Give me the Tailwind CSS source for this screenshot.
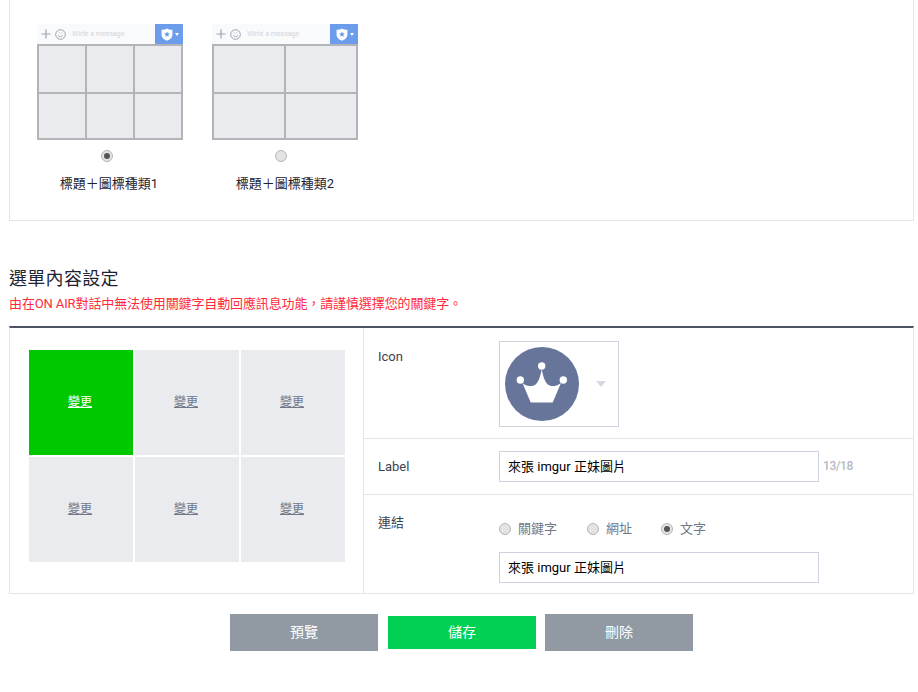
<!DOCTYPE html>
<html lang="zh-Hant">
<head>
    <meta charset="UTF-8">
    <meta name="viewport" content="width=device-width, initial-scale=1.0">
    <title>選單內容設定</title>
    <script src="https://cdn.jsdelivr.net/npm/@tailwindcss/browser@4"></script>
</head>
<body class="bg-white text-[#1e2433] h-[692px] overflow-hidden font-['Roboto','Noto_Sans_CJK_TC',sans-serif] text-[13px]">
<div class="ml-[9px] w-[905px]">

    <!-- layout picker -->
    <div class="h-[221px] border-x border-b border-[#e4e5ea] pl-[27px] pt-[24px] flex gap-[29px]">
        <div class="w-[146px] flex flex-col items-center">
            <div class="w-full h-[20px] bg-[#f9fafc] flex items-center">
                <svg class="ml-[4px] w-[10px] h-[10px]" viewBox="0 0 10 10"><path d="M5 0.5v9M0.5 5h9" stroke="#9ea3b0" stroke-width="1.2" fill="none"/></svg>
                <svg class="ml-[4px] w-[11px] h-[11px]" viewBox="0 0 11 11" fill="none" stroke="#9ea3b0"><circle cx="5.5" cy="5.5" r="4.8"/><path d="M3.2 6.5c.8 1.4 3.8 1.4 4.6 0"/><path d="M3.8 4h.8M6.4 4h.8"/></svg>
                <span class="ml-[6px] text-[7px] text-[#d2d5db]">Wirte a message</span>
                <div class="ml-auto w-[28px] h-full bg-[#6c9cec] flex items-center pl-[6px] gap-[2px]">
                    <svg class="w-[12px] h-[13px]" viewBox="0 0 11 12"><path d="M5.5 0.5c1.5 1 3 1.2 5 1.2v4.500c0 2.600-2.400 4.600-5 5.500-2.600-.9-5-2.900-5-5.500V1.700c2 0 3.500-.2 5-1.200z" fill="#fff"/><path d="M5.500 3.200l.8 1.700 1.800.2-1.300 1.200.3 1.800-1.600-.9-1.600.9.300-1.800-1.300-1.200 1.800-.2z" fill="#6c9cec"/></svg>
                    <svg class="w-[4px] h-[3px]" viewBox="0 0 4 3"><path d="M0 0h4L2 3z" fill="#fff"/></svg>
                </div>
            </div>
            <div class="w-full h-[96px] bg-[#b2b4b8] p-[2px] grid grid-cols-[46px_46px_46px] grid-rows-[46px_44px] gap-[2px]">
                <div class="bg-[#e9ebef]"></div><div class="bg-[#e9ebef]"></div><div class="bg-[#e9ebef]"></div>
                <div class="bg-[#e9ebef]"></div><div class="bg-[#e9ebef]"></div><div class="bg-[#e9ebef]"></div>
            </div>
            <span class="mt-[10px] mr-[6px] w-[12px] h-[12px] rounded-full border border-[#b5b5b5] bg-[#e4e4e4] flex items-center justify-center"><span class="w-[6px] h-[6px] rounded-full bg-[#555]"></span></span>
            <p class="mt-[13px] mr-[2px] leading-[18px]">標題＋圖標種類1</p>
        </div>
        <div class="w-[146px] flex flex-col items-center">
            <div class="w-full h-[20px] bg-[#f9fafc] flex items-center">
                <svg class="ml-[4px] w-[10px] h-[10px]" viewBox="0 0 10 10"><path d="M5 0.5v9M0.5 5h9" stroke="#9ea3b0" stroke-width="1.2" fill="none"/></svg>
                <svg class="ml-[4px] w-[11px] h-[11px]" viewBox="0 0 11 11" fill="none" stroke="#9ea3b0"><circle cx="5.5" cy="5.5" r="4.8"/><path d="M3.2 6.5c.8 1.4 3.8 1.4 4.6 0"/><path d="M3.8 4h.8M6.4 4h.8"/></svg>
                <span class="ml-[6px] text-[7px] text-[#d2d5db]">Wirte a message</span>
                <div class="ml-auto w-[28px] h-full bg-[#6c9cec] flex items-center pl-[6px] gap-[2px]">
                    <svg class="w-[12px] h-[13px]" viewBox="0 0 11 12"><path d="M5.5 0.5c1.5 1 3 1.2 5 1.2v4.500c0 2.600-2.400 4.600-5 5.500-2.600-.9-5-2.900-5-5.500V1.700c2 0 3.500-.2 5-1.200z" fill="#fff"/><path d="M5.500 3.200l.8 1.700 1.800.2-1.300 1.200.3 1.800-1.600-.9-1.600.9.300-1.800-1.300-1.200 1.800-.2z" fill="#6c9cec"/></svg>
                    <svg class="w-[4px] h-[3px]" viewBox="0 0 4 3"><path d="M0 0h4L2 3z" fill="#fff"/></svg>
                </div>
            </div>
            <div class="w-full h-[96px] bg-[#b2b4b8] p-[2px] grid grid-cols-[70px_70px] grid-rows-[46px_44px] gap-[2px]">
                <div class="bg-[#e9ebef]"></div><div class="bg-[#e9ebef]"></div>
                <div class="bg-[#e9ebef]"></div><div class="bg-[#e9ebef]"></div>
            </div>
            <span class="mt-[10px] mr-[8px] w-[12px] h-[12px] rounded-full border border-[#b5b5b5] bg-[#e4e4e4]"></span>
            <p class="mt-[13px] leading-[18px]">標題＋圖標種類2</p>
        </div>
    </div>

    <!-- section heading -->
    <h2 class="mt-[47px] text-[18px] tracking-[0.3px] leading-[22px] font-normal">選單內容設定</h2>
    <p class="mt-[5px] text-[13px] tracking-[-0.12px] leading-[17px] text-[#ff2a3a]">由在ON AIR對話中無法使用關鍵字自動回應訊息功能，請謹慎選擇您的關鍵字。</p>

    <!-- content table -->
    <div class="mt-[14px] h-[268px] border-t-2 border-t-[#4c5364] border-x border-b border-x-[#e4e5ea] border-b-[#e4e5ea] flex">
        <div class="w-[354px] shrink-0 border-r border-[#e4e5ea] pt-[22px] pl-[19px]">
            <div class="grid grid-cols-[104px_104px_104px] grid-rows-[105px_105px] gap-[2px] text-[12px]">
                <a class="bg-[#00c800] text-white underline flex items-center justify-center pb-[1px] pr-[2px]">變更</a>
                <a class="bg-[#e9ebef] text-[#6f7888] underline flex items-center justify-center pb-[1px] pr-[2px]">變更</a>
                <a class="bg-[#e9ebef] text-[#6f7888] underline flex items-center justify-center pb-[1px] pr-[2px]">變更</a>
                <a class="bg-[#e9ebef] text-[#6f7888] underline flex items-center justify-center pb-[1px] pr-[2px]">變更</a>
                <a class="bg-[#e9ebef] text-[#6f7888] underline flex items-center justify-center pb-[1px] pr-[2px]">變更</a>
                <a class="bg-[#e9ebef] text-[#6f7888] underline flex items-center justify-center pb-[1px] pr-[2px]">變更</a>
            </div>
        </div>
        <div class="flex-1 flex flex-col">
            <div class="h-[111px] border-b border-[#e4e5ea] flex">
                <div class="w-[135px] pl-[14px] pt-[21px] leading-[16px] text-[#3c4250]">Icon</div>
                <div class="mt-[13px] w-[120px] h-[86px] border border-[#ced2de] flex items-center pl-[5px]">
                    <svg class="w-[74px] h-[74px]" viewBox="0 0 74 74">
                        <circle cx="37" cy="37" r="37" fill="#67759b"/>
                        <path d="M36.700 22C38 30 41 39 46.500 39C50 39 53 38.500 56 36L47.700 55.500H25.700L17.500 36C20 38.500 23 39 27 39C32.500 39 35.400 30 36.700 22Z" fill="#fff"/>
                        <circle cx="36.700" cy="19" r="3.700" fill="#fff"/>
                        <circle cx="15.300" cy="33" r="3.700" fill="#fff"/>
                        <circle cx="58.300" cy="33" r="3.700" fill="#fff"/>
                    </svg>
                    <svg class="ml-[17px] w-[10px] h-[6px]" viewBox="0 0 10 6"><path d="M0 0h10L5 6z" fill="#d5d8e0"/></svg>
                </div>
            </div>
            <div class="h-[56px] border-b border-[#e4e5ea] flex">
                <div class="w-[135px] pl-[14px] pt-[20px] leading-[16px] text-[#3c4250]">Label</div>
                <div class="mt-[12px] w-[320px] h-[31px] border border-[#ced2de] pl-[8px] flex items-center text-black">來張 imgur 正妹圖片</div>
                <span class="ml-[4px] mt-[20px] text-[12px] tracking-[-0.4px] leading-[14px] font-medium text-[#b5b9c4]">13/18</span>
            </div>
            <div class="flex-1 flex">
                <div class="w-[135px] pl-[14px] pt-[20px] leading-[16px] text-[#3c4250]">連結</div>
                <div class="pt-[25px]">
                    <div class="flex items-center h-[18px] text-[#6f7888]">
                        <span class="w-[12px] h-[12px] rounded-full border border-[#b5b5b5] bg-[#e4e4e4]"></span>
                        <span class="ml-[7px] w-[52px]">關鍵字</span>
                        <span class="ml-[17px] w-[12px] h-[12px] rounded-full border border-[#b5b5b5] bg-[#e4e4e4]"></span>
                        <span class="ml-[7px] w-[55px]">網址</span>
                        <span class="w-[12px] h-[12px] rounded-full border border-[#b5b5b5] bg-[#e4e4e4] flex items-center justify-center"><span class="w-[6px] h-[6px] rounded-full bg-[#555]"></span></span>
                        <span class="ml-[7px]">文字</span>
                    </div>
                    <div class="mt-[14px] w-[320px] h-[31px] border border-[#ced2de] pl-[8px] flex items-center text-black">來張 imgur 正妹圖片</div>
                </div>
            </div>
        </div>
    </div>

    <!-- actions -->
    <div class="mt-[20px] pl-[221px] flex items-center text-white text-[14px]">
        <button class="w-[148px] h-[37px] bg-[#919aa3]">預覽</button>
        <button class="ml-[10px] w-[148px] h-[33px] bg-[#00d152]">儲存</button>
        <button class="ml-[9px] w-[148px] h-[37px] bg-[#919aa3]">刪除</button>
    </div>
</div>
</body>
</html>
